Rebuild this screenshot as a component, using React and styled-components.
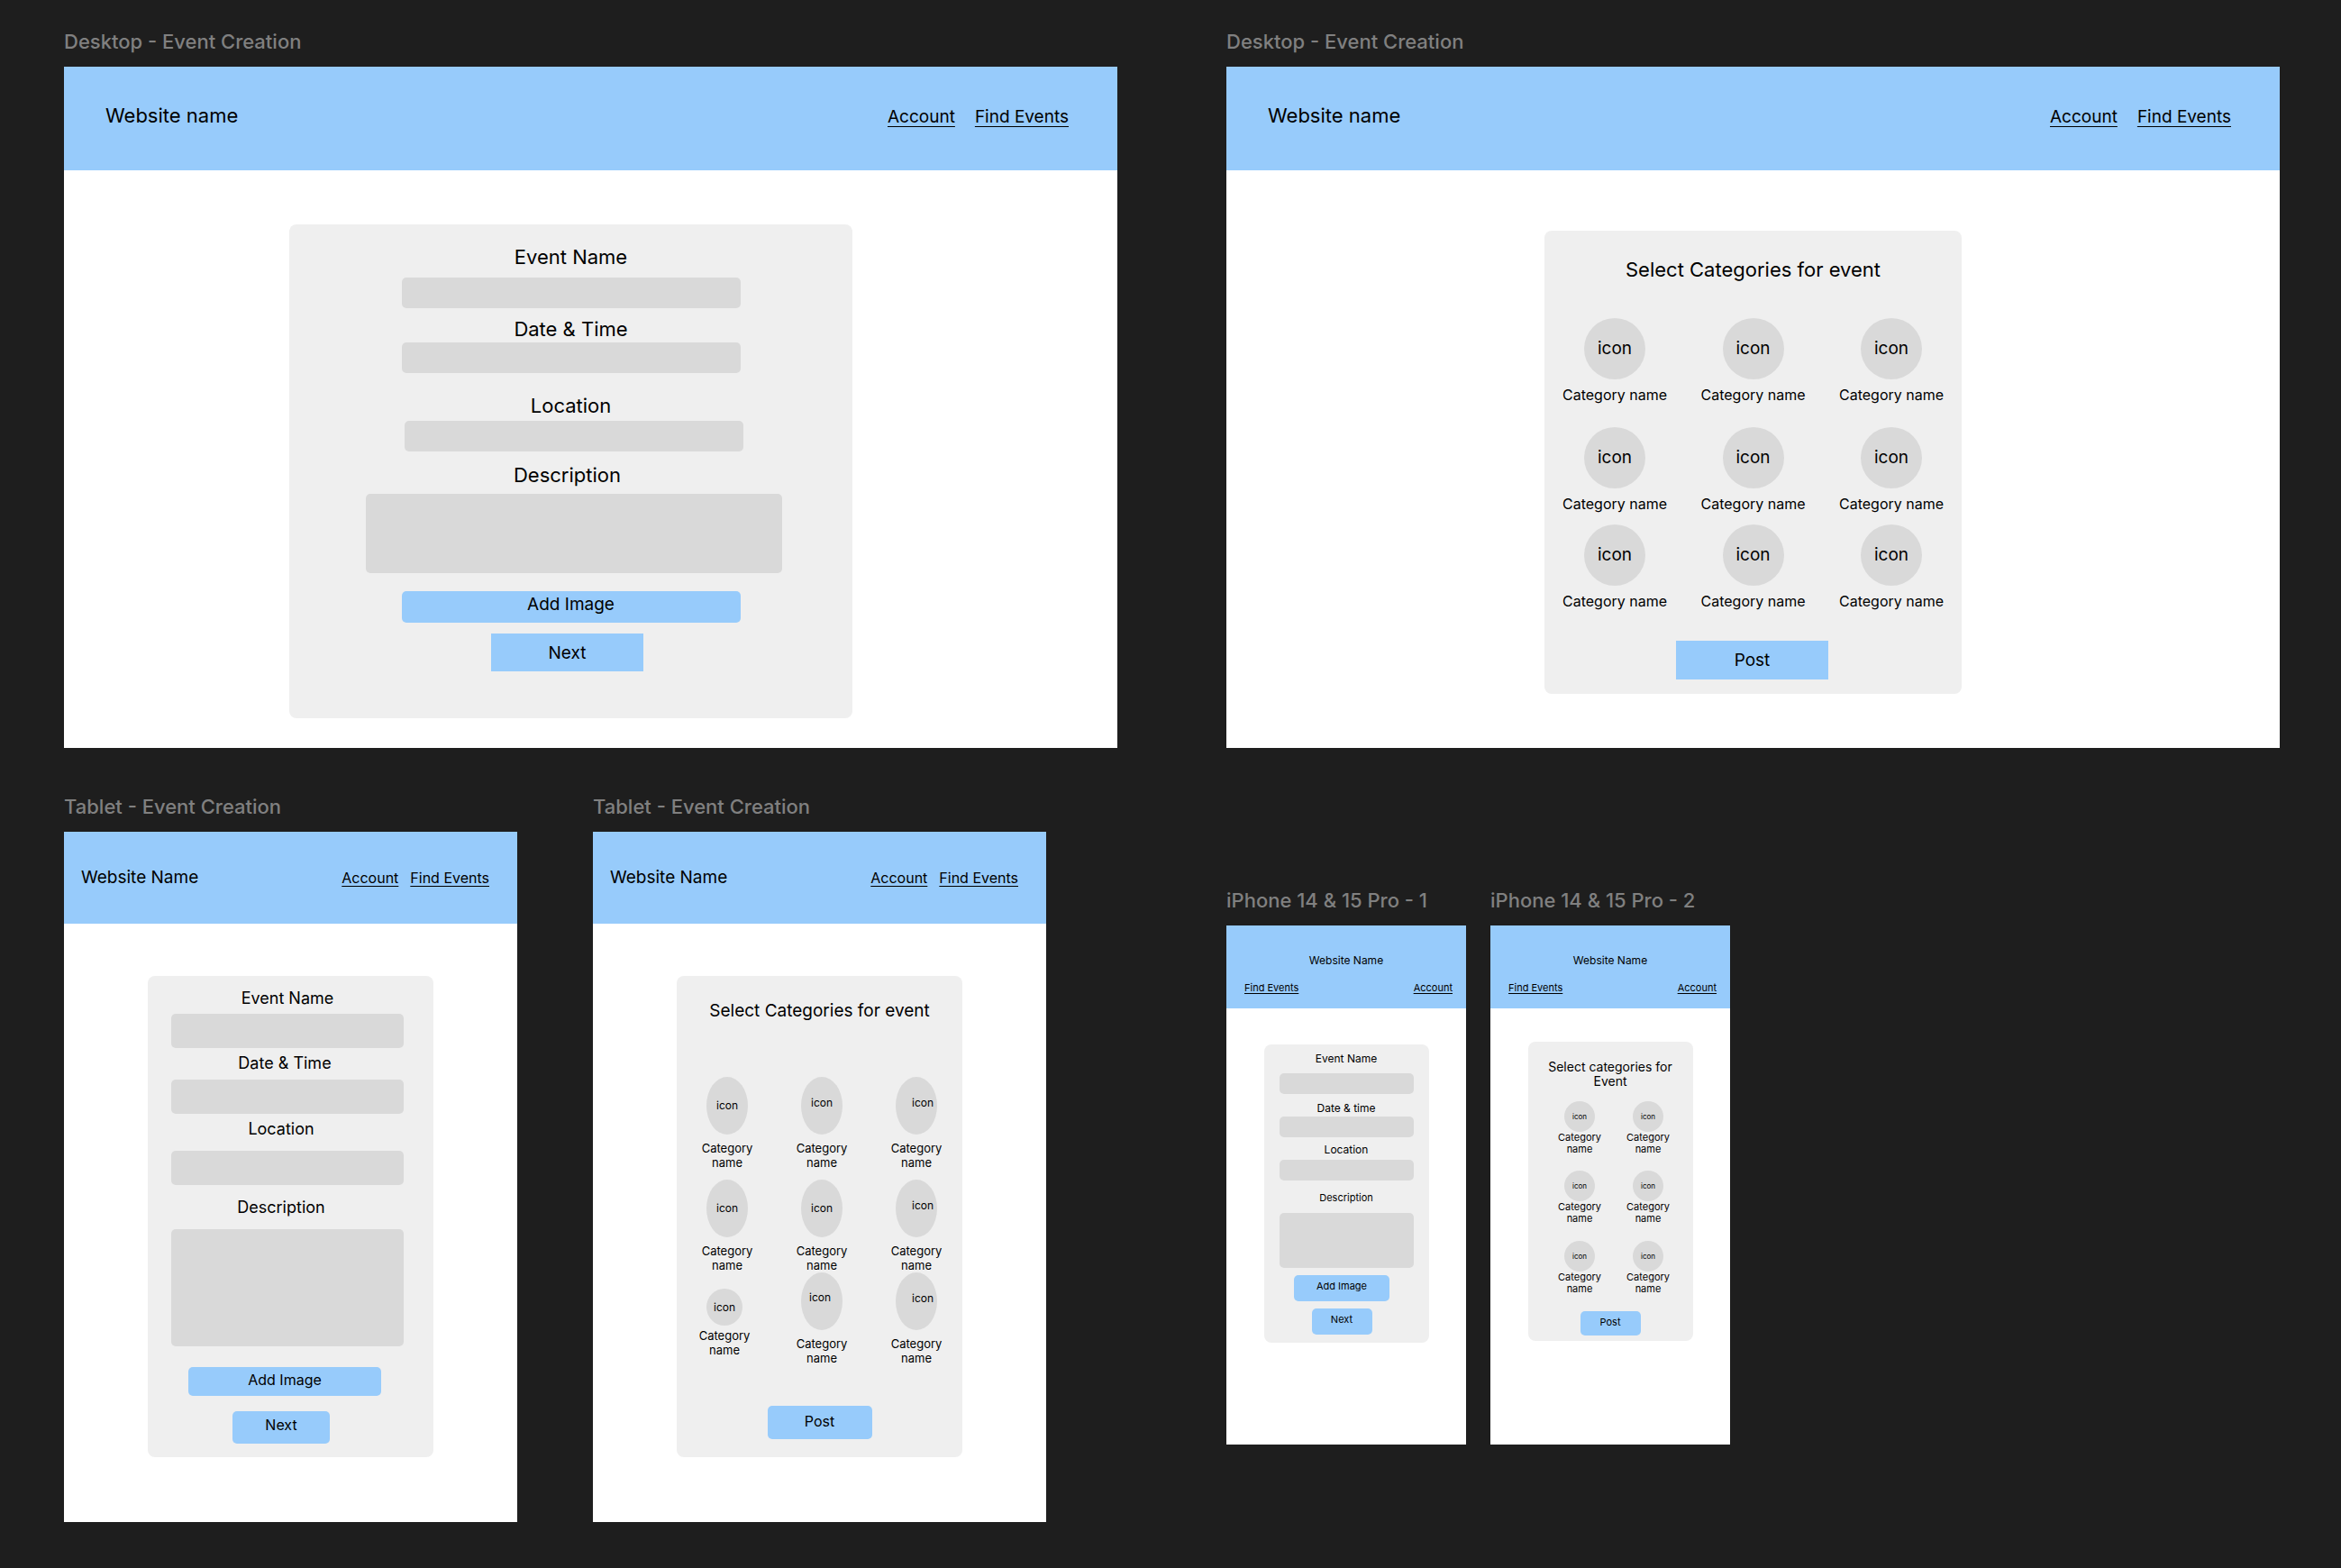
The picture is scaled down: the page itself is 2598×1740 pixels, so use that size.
import React, { useId } from "react";
import styled, { createGlobalStyle, ThemeProvider } from "styled-components";

const GlobalStyle = createGlobalStyle`
  *, *::before, *::after { box-sizing: border-box; }
  body {
    margin: 0;
    background: #1e1e1e;
    color: #000;
    font-family: Inter, "Liberation Sans", sans-serif;
  }
  button, input, textarea { font: inherit; color: inherit; }
`;

const color = {
  accent: "#97cbfb",
  card: "#efefef",
  control: "#d9d9d9",
  caption: "#808080",
};

/* One set of sizes for each device the wireframes are drawn for. */
const desktop = {
  headerHeight: 115,
  headerPadding: "41px 54px 0 46px",
  navGap: 22,
  brand: 22,
  link: 19,
  underline: 4,
  title: 22,
  titleLine: 26,
  label: 22,
  labelLine: 26,
  button: 19,
  icon: 19,
  iconWidth: 68,
  iconHeight: 68,
  nameGap: 7,
  name: 16,
  nameLine: 20,
  nameWidth: 120,
};

const tablet = {
  headerHeight: 102,
  headerPadding: "39px 31px 0 19px",
  navGap: 13,
  brand: 19,
  link: 16,
  underline: 3,
  title: 19,
  titleLine: 24,
  label: 18,
  labelLine: 22,
  button: 16,
  icon: 12,
  iconWidth: 46,
  iconHeight: 64,
  nameGap: 7,
  name: 13,
  nameLine: 16,
  nameWidth: 62,
};

const phone = {
  headerHeight: 92,
  headerPadding: "32px 0 16px",
  brand: 12,
  link: 11,
  underline: 2,
  title: 14,
  titleLine: 16,
  label: 12,
  labelLine: 14,
  button: 11,
  icon: 8,
  iconWidth: 34,
  iconHeight: 34,
  nameGap: 0,
  name: 11,
  nameLine: 13,
  nameWidth: 50,
};

const Canvas = styled.div`
  display: grid;
  grid-template-columns: 1fr 1fr;
  column-gap: 121px;
  row-gap: 51px;
  min-height: 100vh;
  align-content: start;
  padding: 32px 68px 48px 71px;
`;

const BoardRow = styled.div`
  display: flex;
  align-items: flex-start;
  gap: ${(p) => p.$gap}px;
  padding-top: ${(p) => p.$top || 0}px;
`;

const Board = styled.section`
  display: flex;
  flex-direction: column;
  gap: 14px;
  ${(p) => p.$width && `flex: 0 1 ${p.$width}px;`}
`;

const BoardTitle = styled.h2`
  margin: 0;
  color: ${color.caption};
  font-size: 22px;
  font-weight: 500;
  line-height: 28px;
  white-space: nowrap;
`;

const Screen = styled.div`
  display: flex;
  flex-direction: column;
  flex: 1;
  background: #fff;
`;

const Header = styled.header`
  display: flex;
  align-items: baseline;
  justify-content: space-between;
  min-height: ${(p) => p.theme.headerHeight}px;
  padding: ${(p) => p.theme.headerPadding};
  background: ${color.accent};
`;

const StackedHeader = styled(Header)`
  flex-direction: column;
  align-items: stretch;
  text-align: center;
  line-height: 14px;
`;

const Brand = styled.div`
  font-size: ${(p) => p.theme.brand}px;
`;

const Nav = styled.nav`
  display: flex;
  gap: ${(p) => p.theme.navGap}px;
`;

const SpreadNav = styled(Nav)`
  justify-content: space-between;
  padding: 0 15px 0 20px;
`;

const NavLink = styled.a`
  color: inherit;
  font-size: ${(p) => p.theme.link}px;
  text-decoration: underline 1px;
  text-underline-offset: ${(p) => p.theme.underline}px;
`;

const Main = styled.main`
  display: flex;
  justify-content: center;
  align-items: flex-start;
  padding: ${(p) => p.$padding};
`;

const Card = styled.form`
  display: flex;
  flex-direction: column;
  align-items: center;
  flex: 0 1 ${(p) => p.$width}px;
  padding: ${(p) => p.$padding};
  border-radius: 8px;
  background: ${color.card};
`;

const FieldGroup = styled.div`
  display: flex;
  flex-direction: column;
  align-items: center;
  gap: ${(p) => p.$gap}px;
  margin-top: ${(p) => p.$top}px;
`;

const FieldLabel = styled.label`
  padding-right: ${(p) => p.$inset || 0}px;
  font-size: ${(p) => p.theme.label}px;
  line-height: ${(p) => p.theme.labelLine}px;
`;

const SmallFieldLabel = styled(FieldLabel)`
  font-size: 11px;
`;

const ControlSlot = styled.div`
  display: flex;
  padding-left: ${(p) => p.$inset || 0}px;
`;

const TextBox = styled.input`
  width: ${(p) => p.$width}px;
  height: ${(p) => p.$height}px;
  padding: 0 8px;
  border: 0;
  border-radius: 5px;
  background: ${color.control};
`;

const TextArea = styled(TextBox)`
  padding: 8px;
  resize: none;
`;

const ButtonRow = styled.div`
  display: flex;
  margin-top: ${(p) => p.$top}px;
  padding-right: ${(p) => p.$inset || 0}px;
`;

const Button = styled.button`
  width: ${(p) => p.$width}px;
  height: ${(p) => p.$height}px;
  padding: 0 0 ${(p) => p.$lift || 0}px;
  border: 0;
  border-radius: ${(p) => (p.$square ? 0 : 5)}px;
  background: ${color.accent};
  font-size: ${(p) => p.theme.button}px;
  cursor: pointer;
`;

const Title = styled.h3`
  max-width: ${(p) => (p.$width ? `${p.$width}px` : "none")};
  margin: 0;
  font-size: ${(p) => p.theme.title}px;
  font-weight: 400;
  line-height: ${(p) => p.theme.titleLine}px;
  text-align: center;
`;

const Categories = styled.div`
  align-self: stretch;
  padding: ${(p) => p.$padding};
`;

const CategoryRow = styled.div`
  display: flex;
  align-items: flex-start;
  justify-content: ${(p) => (p.$gap ? "center" : "space-between")};
  gap: ${(p) => p.$gap || 0}px;
  margin-top: ${(p) => p.$top}px;
`;

const CategoryButton = styled.button`
  display: flex;
  flex-direction: column;
  align-items: center;
  gap: ${(p) => (p.$compact ? 3 : p.theme.nameGap)}px;
  width: ${(p) => p.theme.nameWidth}px;
  margin: ${(p) => (p.$compact ? "18px 3px 0 -3px" : 0)};
  padding: 0;
  border: 0;
  background: none;
  cursor: pointer;
`;

const Icon = styled.span`
  display: flex;
  align-items: center;
  justify-content: center;
  width: ${(p) => (p.$compact ? 40 : p.theme.iconWidth)}px;
  height: ${(p) => (p.$compact ? 41 : p.theme.iconHeight)}px;
  padding: ${(p) => p.$padding || 0};
  border-radius: 50%;
  background: ${color.control};
  font-size: ${(p) => p.theme.icon}px;
`;

const CategoryName = styled.span`
  font-size: ${(p) => p.theme.name}px;
  line-height: ${(p) => p.theme.nameLine}px;
  text-align: center;
`;

function SiteHeader({ name }) {
  return (
    <Header>
      <Brand>{name}</Brand>
      <Nav>
        <NavLink href="#account">Account</NavLink>
        <NavLink href="#events">Find Events</NavLink>
      </Nav>
    </Header>
  );
}

function PhoneHeader() {
  return (
    <StackedHeader>
      <Brand>Website Name</Brand>
      <SpreadNav>
        <NavLink href="#events">Find Events</NavLink>
        <NavLink href="#account">Account</NavLink>
      </SpreadNav>
    </StackedHeader>
  );
}

function Field({ label, top, gap, width, height, labelInset, inset, multiline, small }) {
  const id = useId();
  const Label = small ? SmallFieldLabel : FieldLabel;
  return (
    <FieldGroup $top={top} $gap={gap}>
      <Label htmlFor={id} $inset={labelInset}>{label}</Label>
      <ControlSlot $inset={inset}>
        {multiline ? (
          <TextArea as="textarea" id={id} $width={width} $height={height} />
        ) : (
          <TextBox type="text" id={id} $width={width} $height={height} />
        )}
      </ControlSlot>
    </FieldGroup>
  );
}

function Action({ children, top, inset, ...size }) {
  return (
    <ButtonRow $top={top} $inset={inset}>
      <Button type="button" $width={size.width} $height={size.height} $lift={size.lift} $square={size.square}>
        {children}
      </Button>
    </ButtonRow>
  );
}

function CategoryGrid({ rows, padding, gap }) {
  return (
    <Categories $padding={padding}>
      {rows.map((row, r) => (
        <CategoryRow key={r} $top={row.top} $gap={gap}>
          {row.items.map((item, i) => (
            <CategoryButton key={i} type="button" $compact={item.compact}>
              <Icon $compact={item.compact} $padding={item.padding}>icon</Icon>
              <CategoryName>Category name</CategoryName>
            </CategoryButton>
          ))}
        </CategoryRow>
      ))}
    </Categories>
  );
}

const plain = {};
const centred = { padding: "0 0 2px" };
const raised = { padding: "0 0 8px" };
const corner = { padding: "0 0 8px 14px" };

const desktopRows = [
  { top: 41, items: [centred, centred, centred] },
  { top: 26, items: [centred, centred, centred] },
  { top: 13, items: [centred, centred, centred] },
];

const tabletRows = [
  { top: 61, items: [centred, raised, corner] },
  { top: 11, items: [centred, centred, corner] },
  { top: 0, items: [{ compact: true }, { padding: "0 4px 10px 0" }, corner] },
];

const phoneRows = [
  { top: 14, items: [plain, plain] },
  { top: 17, items: [plain, plain] },
  { top: 18, items: [plain, plain] },
];

export default function App() {
  return (
    <>
      <GlobalStyle />
      <Canvas>
        <ThemeProvider theme={desktop}>
          <Board>
            <BoardTitle>Desktop - Event Creation</BoardTitle>
            <Screen>
              <SiteHeader name="Website name" />
              <Main $padding="60px 44px 33px 0">
                <Card $width={625} $padding="23px 0 52px">
                  <Field label="Event Name" top={0} gap={10} width={376} height={34} />
                  <Field label="Date & Time" top={10} gap={2} width={376} height={34} />
                  <Field label="Location" top={23} gap={4} width={376} height={34} inset={6} />
                  <Field label="Description" top={13} gap={8} width={462} height={88} labelInset={8} inset={6} multiline />
                  <Action top={20} width={376} height={35} lift={6}>Add Image</Action>
                  <Action top={12} inset={8} width={169} height={42} square>Next</Action>
                </Card>
              </Main>
            </Screen>
          </Board>

          <Board>
            <BoardTitle>Desktop - Event Creation</BoardTitle>
            <Screen>
              <SiteHeader name="Website name" />
              <Main $padding="67px 0 60px">
                <Card $width={463} $padding="30px 0 16px">
                  <Title>Select Categories for event</Title>
                  <CategoryGrid rows={desktopRows} padding="0 18px" />
                  <Action top={34} inset={2} width={169} height={43} square>Post</Action>
                </Card>
              </Main>
            </Screen>
          </Board>
        </ThemeProvider>

        <BoardRow $gap={84}>
          <ThemeProvider theme={tablet}>
            <Board $width={503}>
              <BoardTitle>Tablet - Event Creation</BoardTitle>
              <Screen>
                <SiteHeader name="Website Name" />
                <Main $padding="58px 0 72px">
                  <Card $width={317} $padding="14px 7px 15px 0">
                    <Field label="Event Name" top={0} gap={6} width={258} height={38} />
                    <Field label="Date & Time" top={6} gap={7} width={258} height={38} labelInset={6} />
                    <Field label="Location" top={6} gap={13} width={258} height={38} labelInset={14} />
                    <Field label="Description" top={14} gap={13} width={258} height={130} labelInset={14} multiline />
                    <Action top={23} inset={6} width={214} height={32} lift={4}>Add Image</Action>
                    <Action top={17} inset={14} width={108} height={36} lift={6}>Next</Action>
                  </Card>
                </Main>
              </Screen>
            </Board>

            <Board $width={503}>
              <BoardTitle>Tablet - Event Creation</BoardTitle>
              <Screen>
                <SiteHeader name="Website Name" />
                <Main $padding="58px 0 72px">
                  <Card $width={317} $padding="27px 0 20px">
                    <Title>Select Categories for event</Title>
                    <CategoryGrid rows={tabletRows} padding="0 20px 0 25px" />
                    <Action top={45} width={116} height={37} lift={4}>Post</Action>
                  </Card>
                </Main>
              </Screen>
            </Board>
          </ThemeProvider>
        </BoardRow>

        <BoardRow $gap={27} $top={104}>
          <ThemeProvider theme={phone}>
            <Board $width={266}>
              <BoardTitle>iPhone 14 &amp; 15 Pro - 1</BoardTitle>
              <Screen>
                <PhoneHeader />
                <Main $padding="40px 0 113px">
                  <Card $width={183} $padding="9px 0">
                    <Field label="Event Name" top={0} gap={9} width={149} height={23} />
                    <Field label="Date & time" top={9} gap={2} width={149} height={23} />
                    <Field label="Location" top={7} gap={4} width={149} height={23} />
                    <Field label="Description" top={12} gap={10} width={149} height={61} multiline small />
                    <Action top={8} inset={10} width={106} height={29} lift={5}>Add Image</Action>
                    <Action top={8} inset={10} width={67} height={29} lift={5}>Next</Action>
                  </Card>
                </Main>
              </Screen>
            </Board>

            <Board $width={266}>
              <BoardTitle>iPhone 14 &amp; 15 Pro - 2</BoardTitle>
              <Screen>
                <PhoneHeader />
                <Main $padding="37px 0 115px">
                  <Card $width={183} $padding="20px 0 6px">
                    <Title $width={144}>Select categories for Event</Title>
                    <CategoryGrid rows={phoneRows} padding="0 0 0 8px" gap={26} />
                    <Action top={18} width={67} height={27} lift={4}>Post</Action>
                  </Card>
                </Main>
              </Screen>
            </Board>
          </ThemeProvider>
        </BoardRow>
      </Canvas>
    </>
  );
}
